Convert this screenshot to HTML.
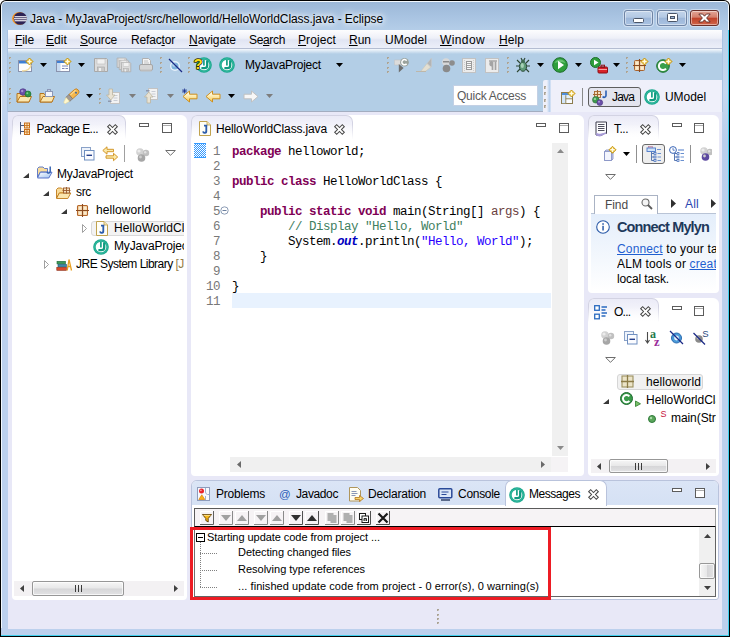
<!DOCTYPE html>
<html><head><meta charset="utf-8"><title>Eclipse</title>
<style>
html,body{margin:0;padding:0;}
body{width:730px;height:637px;overflow:hidden;background:#fff;position:relative;font-family:"Liberation Sans",sans-serif;font-size:12px;color:#000;}
#win{position:absolute;left:0;top:0;width:730px;height:637px;overflow:hidden;}
#win div,#win span.t,#win svg{position:absolute;}
#win svg{overflow:visible;}
span.t{white-space:nowrap;line-height:16px;}
u{text-decoration:underline;text-underline-offset:1px;}
.mono{font-family:"Liberation Mono",monospace;}
b.k{color:#7f0055;font-weight:bold;}
i.v{font-style:normal;color:#6a3e3e;}
i.c{font-style:normal;color:#3f7f5f;}
i.s{font-style:normal;color:#2a00ff;}
i.o{font-style:italic;font-weight:bold;color:#0000c0;}
a{color:#1f5fd0;text-decoration:underline;text-underline-offset:1px;}
em{font-style:normal;color:#957d47;}

</style></head><body>
<div id="win">
<div style="left:0px;top:0px;width:730px;height:637px;background:#000;border-radius:6px 6px 0 0;"></div>
<div style="left:1px;top:1px;width:728px;height:635px;background:#f2f8fd;border-radius:5px 5px 0 0;"></div>
<div style="left:2px;top:2px;width:726px;height:633px;background:linear-gradient(#9cb8d8 0px,#a8c3e1 14px,#b6cfe9 30px,#c5d8f0 90px,#b9ceec 140px,#bcd0ed 300px);border-radius:4px 4px 0 0;"></div>
<div style="left:7px;top:30px;width:716px;height:82px;background:#a9c3e3;"></div>
<div style="left:8px;top:30px;width:714px;height:82px;background:#b3cee6;"></div>
<div style="left:1px;top:628px;width:728px;height:8px;background:#40d0ee;"></div>
<div style="left:1px;top:628px;width:727px;height:7px;background:#bcd0ed;"></div>
<div style="left:728px;top:30px;width:1px;height:606px;background:#40d0ee;"></div>
<svg style="left:12px;top:12px" width="15" height="13" viewBox="0 0 15 13"><ellipse cx="7.300" cy="6.500" rx="7.200" ry="6.400" fill="#f7941e"/><ellipse cx="8.300" cy="6.500" rx="6.600" ry="6.300" fill="#2c2255"/><rect x="2.500" y="4.200" width="12.200" height="1.100" fill="#fff"/><rect x="2" y="6.200" width="12.800" height="1.100" fill="#fff"/><rect x="2.500" y="8.200" width="12.200" height="1.100" fill="#fff"/></svg>
<span class="t" style="left:30px;top:11px;font-size:12px;letter-spacing:-0.074px;text-shadow:0 0 7px #fff,0 0 10px #fff,0 0 4px #eaf2fb;">Java - MyJavaProject/src/helloworld/HelloWorldClass.java - Eclipse</span>
<div style="left:624px;top:10px;width:29px;height:16px;background:linear-gradient(#c3d5eb 0,#b4c9e4 45%,#9db7d9 50%,#a9c2e2 100%);border:1px solid #6f84a4;border-radius:3px;box-sizing:border-box;box-shadow:inset 0 0 0 1px rgba(255,255,255,0.450),0 0 0 1px rgba(235,243,252,0.550);"></div>
<div style="left:657px;top:10px;width:30px;height:16px;background:linear-gradient(#c3d5eb 0,#b4c9e4 45%,#9db7d9 50%,#a9c2e2 100%);border:1px solid #6f84a4;border-radius:3px;box-sizing:border-box;box-shadow:inset 0 0 0 1px rgba(255,255,255,0.450),0 0 0 1px rgba(235,243,252,0.550);"></div>
<div style="left:690px;top:10px;width:29px;height:16px;background:linear-gradient(#e2a596 0,#d47f6b 45%,#bf4128 50%,#d0654a 100%);border:1px solid #6b2f28;border-radius:3px;box-sizing:border-box;box-shadow:inset 0 0 0 1px rgba(255,255,255,0.450),0 0 0 1px rgba(235,243,252,0.550);"></div>
<svg style="left:633px;top:18px" width="12" height="5" viewBox="0 0 12 5"><rect x="0.500" y="0.500" width="10" height="4" rx="1" fill="#fff" stroke="#4a5568" stroke-width="1"/></svg>
<svg style="left:667px;top:13px" width="11" height="9" viewBox="0 0 11 9"><rect x="0.500" y="0.500" width="10" height="8" rx="1" fill="#fff" stroke="#4a5568"/><rect x="3.500" y="3.500" width="4" height="2" fill="#9fb7d8" stroke="#4a5568"/></svg>
<svg style="left:698px;top:13px" width="13" height="10" viewBox="0 0 13 10"><path d="M0.800 1h3.800L6.500 3.200L8.400 1H12.200L8.600 5L12.200 9H8.400L6.500 6.800L4.600 9H0.800L4.400 5z" fill="#fff" stroke="#5b2a25" stroke-width="0.900"/></svg>
<div style="left:8px;top:30px;width:714px;height:18px;background:linear-gradient(#fdfdfe 0,#eef0f8 45%,#e1e5f3 55%,#eceff9 100%);"></div>
<div style="left:8px;top:48px;width:714px;height:1px;background:#b4bdd2;"></div>
<div style="left:8px;top:49px;width:714px;height:5px;background:linear-gradient(#f6f9fd,#b3cee6);"></div>
<span class="t" style="left:15px;top:32px;font-size:12px;letter-spacing:-0.090px;"><u>F</u>ile</span>
<span class="t" style="left:46px;top:32px;font-size:12px;letter-spacing:0.074px;"><u>E</u>dit</span>
<span class="t" style="left:80px;top:32px;font-size:12px;letter-spacing:-0.174px;"><u>S</u>ource</span>
<span class="t" style="left:131px;top:32px;font-size:12px;letter-spacing:-0.172px;">Refac<u>t</u>or</span>
<span class="t" style="left:189px;top:32px;font-size:12px;letter-spacing:-0.047px;"><u>N</u>avigate</span>
<span class="t" style="left:249px;top:32px;font-size:12px;letter-spacing:-0.341px;">Se<u>a</u>rch</span>
<span class="t" style="left:298px;top:32px;font-size:12px;letter-spacing:0.092px;"><u>P</u>roject</span>
<span class="t" style="left:349px;top:32px;font-size:12px;letter-spacing:-0.010px;"><u>R</u>un</span>
<span class="t" style="left:385px;top:32px;font-size:12px;letter-spacing:0.107px;">UModel</span>
<span class="t" style="left:440px;top:32px;font-size:12px;letter-spacing:0.385px;"><u>W</u>indow</span>
<span class="t" style="left:499px;top:32px;font-size:12px;letter-spacing:0.078px;"><u>H</u>elp</span>
<div style="left:8px;top:111px;width:714px;height:1px;background:#a3adc0;"></div>
<div style="left:8px;top:112px;width:714px;height:517px;background:#e8e8f7;"></div>
<svg style="left:9px;top:57px" width="3" height="18" viewBox="0 0 3 18"><rect x="0" y="0" width="2" height="2" fill="#aaa395"/><rect x="1" y="1" width="1" height="1" fill="#cfc9bd"/><rect x="0" y="5" width="2" height="2" fill="#aaa395"/><rect x="1" y="6" width="1" height="1" fill="#cfc9bd"/><rect x="0" y="10" width="2" height="2" fill="#aaa395"/><rect x="1" y="11" width="1" height="1" fill="#cfc9bd"/><rect x="0" y="14" width="2" height="2" fill="#aaa395"/><rect x="1" y="15" width="1" height="1" fill="#cfc9bd"/></svg>
<svg style="left:18px;top:57px" width="16" height="16" viewBox="0 0 16 16"><rect x="0.5" y="3.5" width="13" height="11" fill="#fdfdfe" stroke="#8a93ad"/><rect x="1" y="4" width="12" height="2" fill="#3f7fd4"/><rect x="1" y="6" width="12" height="1" fill="#9cc3ee"/><path d="M13 8Q12 14 4 14" stroke="#f2dca0" stroke-width="1.5" fill="none"/><path d="M11.5 1.0L15.0 4.5L11.5 8.0L8.0 4.5z" fill="#e9b81f" stroke="#c29312" stroke-width="0.9" stroke-linejoin="round"/><path d="M9.3 4.5h4.4M11.5 2.3v4.4" stroke="#fffbe6" stroke-width="1.4"/></svg>
<svg style="left:40px;top:63px" width="7" height="4" viewBox="0 0 7 4"><path d="M0 0h7L3.5 4z" fill="#000"/></svg>
<svg style="left:56px;top:57px" width="16" height="16" viewBox="0 0 16 16"><rect x="0.5" y="3.5" width="13" height="11" fill="#fdfdfe" stroke="#8a93ad"/><rect x="1" y="4" width="12" height="2" fill="#3f7fd4"/><rect x="1" y="6" width="3.5" height="8" fill="#c8daf0"/><rect x="6" y="8.500" width="6" height="1" fill="#7a88b8"/><rect x="6" y="11" width="2.500" height="1" fill="#7a88b8"/><rect x="9.500" y="11" width="2.500" height="1" fill="#7a88b8"/><path d="M11.5 1.0L15.0 4.5L11.5 8.0L8.0 4.5z" fill="#e9b81f" stroke="#c29312" stroke-width="0.9" stroke-linejoin="round"/><path d="M9.3 4.5h4.4M11.5 2.3v4.4" stroke="#fffbe6" stroke-width="1.4"/></svg>
<svg style="left:78px;top:63px" width="7" height="4" viewBox="0 0 7 4"><path d="M0 0h7L3.5 4z" fill="#000"/></svg>
<svg style="left:93px;top:57px" width="16" height="16" viewBox="0 0 16 16"><g transform="translate(0,0)"><path d="M1.5 1.5h12l1 1v12h-13z" fill="#dcdcdc" stroke="#a8a8a8"/><rect x="4" y="2" width="8" height="5" fill="#f1f1f1" stroke="#bdbdbd" stroke-width="0.6"/><rect x="4.5" y="10" width="7" height="4.5" fill="#c9c9c9" stroke="#a5a5a5" stroke-width="0.6"/><rect x="6" y="11" width="2" height="3" fill="#efefef"/></g></svg>
<svg style="left:116px;top:57px" width="16" height="16" viewBox="0 0 16 16"><g transform="scale(0.72)"><g transform="translate(0,0)"><path d="M1.5 1.5h12l1 1v12h-13z" fill="#dcdcdc" stroke="#a8a8a8"/><rect x="4" y="2" width="8" height="5" fill="#f1f1f1" stroke="#bdbdbd" stroke-width="0.6"/><rect x="4.5" y="10" width="7" height="4.5" fill="#c9c9c9" stroke="#a5a5a5" stroke-width="0.6"/><rect x="6" y="11" width="2" height="3" fill="#efefef"/></g><g transform="translate(3,3)"><path d="M1.5 1.5h12l1 1v12h-13z" fill="#dcdcdc" stroke="#a8a8a8"/><rect x="4" y="2" width="8" height="5" fill="#f1f1f1" stroke="#bdbdbd" stroke-width="0.6"/><rect x="4.5" y="10" width="7" height="4.5" fill="#c9c9c9" stroke="#a5a5a5" stroke-width="0.6"/><rect x="6" y="11" width="2" height="3" fill="#efefef"/></g><g transform="translate(6,6)"><path d="M1.5 1.5h12l1 1v12h-13z" fill="#dcdcdc" stroke="#a8a8a8"/><rect x="4" y="2" width="8" height="5" fill="#f1f1f1" stroke="#bdbdbd" stroke-width="0.6"/><rect x="4.5" y="10" width="7" height="4.5" fill="#c9c9c9" stroke="#a5a5a5" stroke-width="0.6"/><rect x="6" y="11" width="2" height="3" fill="#efefef"/></g></g></svg>
<svg style="left:138px;top:57px" width="16" height="16" viewBox="0 0 16 16"><path d="M4.5 1.500h6l2 2v4h-8z" fill="#f4f4f4" stroke="#b0b0b0"/><path d="M6 4h4M6 6h5" stroke="#c0c0c0"/><rect x="1.500" y="7.500" width="13" height="6" rx="1.500" fill="#d6d6d6" stroke="#a6a6a6"/><rect x="2.500" y="12.500" width="11" height="2" fill="#bdbdbd"/></svg>
<svg style="left:160px;top:57px" width="3" height="18" viewBox="0 0 3 18"><rect x="0" y="0" width="2" height="2" fill="#aaa395"/><rect x="1" y="1" width="1" height="1" fill="#cfc9bd"/><rect x="0" y="5" width="2" height="2" fill="#aaa395"/><rect x="1" y="6" width="1" height="1" fill="#cfc9bd"/><rect x="0" y="10" width="2" height="2" fill="#aaa395"/><rect x="1" y="11" width="1" height="1" fill="#cfc9bd"/><rect x="0" y="14" width="2" height="2" fill="#aaa395"/><rect x="1" y="15" width="1" height="1" fill="#cfc9bd"/></svg>
<svg style="left:167px;top:57px" width="16" height="16" viewBox="0 0 16 16"><circle cx="8" cy="9" r="4.3" fill="#7fb2dc" stroke="#e8f2fb" stroke-width="1.4"/><circle cx="7" cy="8" r="1.8" fill="#b7d6ee"/><path d="M2 2L15 15" stroke="#1b2a86" stroke-width="1.3"/></svg>
<svg style="left:188px;top:57px" width="3" height="18" viewBox="0 0 3 18"><rect x="0" y="0" width="2" height="2" fill="#aaa395"/><rect x="1" y="1" width="1" height="1" fill="#cfc9bd"/><rect x="0" y="5" width="2" height="2" fill="#aaa395"/><rect x="1" y="6" width="1" height="1" fill="#cfc9bd"/><rect x="0" y="10" width="2" height="2" fill="#aaa395"/><rect x="1" y="11" width="1" height="1" fill="#cfc9bd"/><rect x="0" y="14" width="2" height="2" fill="#aaa395"/><rect x="1" y="15" width="1" height="1" fill="#cfc9bd"/></svg>
<svg style="left:195px;top:57px" width="17" height="16" viewBox="0 0 17 16"><g transform="translate(1,0)"><circle cx="8" cy="8" r="7.800" fill="#19a88d"/><circle cx="8" cy="8" r="6.300" fill="none" stroke="#3fc0a6" stroke-width="0.800"/><circle cx="8" cy="8" r="5.300" fill="#fff"/><path d="M7.900 2.800V8.600" stroke="#14a085" stroke-width="1.700" fill="none"/><path d="M11.200 3.600V8.400Q11.200 11.100 8.200 11.100H5.400" stroke="#109a80" stroke-width="2.300" fill="none"/></g><text x="-1.200" y="11.500" font-family="Liberation Sans,sans-serif" font-weight="bold" font-size="14.500" fill="#ffe01a" stroke="#2e2600" stroke-width="1.500" paint-order="stroke" stroke-linejoin="round">?</text></svg>
<svg style="left:219px;top:57px" width="16" height="16" viewBox="0 0 16 16"><circle cx="8" cy="8" r="7.800" fill="#19a88d"/><circle cx="8" cy="8" r="6.300" fill="none" stroke="#3fc0a6" stroke-width="0.800"/><circle cx="8" cy="8" r="5.300" fill="#fff"/><path d="M7.900 2.800V8.600" stroke="#14a085" stroke-width="1.700" fill="none"/><path d="M11.200 3.600V8.400Q11.200 11.100 8.200 11.100H5.400" stroke="#109a80" stroke-width="2.300" fill="none"/></svg>
<span class="t" style="left:245px;top:57px;font-size:12px;letter-spacing:-0.208px;">MyJavaProject</span>
<svg style="left:336px;top:63px" width="7" height="4" viewBox="0 0 7 4"><path d="M0 0h7L3.5 4z" fill="#000"/></svg>
<svg style="left:387px;top:57px" width="3" height="18" viewBox="0 0 3 18"><rect x="0" y="0" width="2" height="2" fill="#aaa395"/><rect x="1" y="1" width="1" height="1" fill="#cfc9bd"/><rect x="0" y="5" width="2" height="2" fill="#aaa395"/><rect x="1" y="6" width="1" height="1" fill="#cfc9bd"/><rect x="0" y="10" width="2" height="2" fill="#aaa395"/><rect x="1" y="11" width="1" height="1" fill="#cfc9bd"/><rect x="0" y="14" width="2" height="2" fill="#aaa395"/><rect x="1" y="15" width="1" height="1" fill="#cfc9bd"/></svg>
<svg style="left:394px;top:57px" width="16" height="16" viewBox="0 0 16 16"><path d="M0.500 3h6v5h-6z" fill="#dcdcdc" stroke="#c4c4c4" stroke-width="0.600"/><path d="M4.800 7v8.500l4.800-4.500z" fill="#6e6e6e"/><circle cx="10.500" cy="5.200" r="4.300" fill="#9aa29c"/><path d="M12.600 3.700a2.600 2.600 0 1 0 0 3" stroke="#fff" stroke-width="1.500" fill="none"/></svg>
<svg style="left:416px;top:57px" width="16" height="16" viewBox="0 0 16 16"><path d="M15.500 1V10L11 6.500z" fill="#b4b4b4" stroke="#c8c8c8" stroke-width="0.500"/><path d="M11 6.500L14.800 10.200L9.500 14.300H4.800z" fill="#e3dfd2" stroke="#c9c4b6" stroke-width="0.600"/><path d="M0 14.500h10" stroke="#bdb7aa"/></svg>
<svg style="left:440px;top:57px" width="16" height="16" viewBox="0 0 16 16"><circle cx="6" cy="5" r="3.800" fill="#d8d8d8"/><circle cx="12" cy="6" r="2.800" fill="#8d8d8d"/><circle cx="6.500" cy="11.500" r="3.800" fill="#8a8a8a"/><rect x="3" y="4" width="6" height="1.500" fill="#8a8a8a"/></svg>
<svg style="left:462px;top:57px" width="15" height="16" viewBox="0 0 15 16"><rect x="0.500" y="1.500" width="13" height="14" fill="#ececec" stroke="#c2c2c2"/><rect x="4.500" y="4.500" width="5" height="8" fill="#fafafa" stroke="#9a9a9a"/><path d="M5 6.500h4M5 8.500h4M5 10.500h4" stroke="#a4a4a4"/><path d="M2.500 3v12M11.500 3v12" stroke="#cfcfcf" stroke-dasharray="1 1"/></svg>
<svg style="left:485px;top:57px" width="15" height="16" viewBox="0 0 15 16"><rect x="0.500" y="1.500" width="13" height="14" fill="#ececec" stroke="#c2c2c2"/><path d="M7.500 4.500V13M10.500 4.500V13" stroke="#a4a4a4" stroke-width="1.700" fill="none"/><path d="M4 4h8" stroke="#a4a4a4" stroke-width="1.400"/><path d="M7 4a2.700 2.700 0 0 0 0 5.400z" fill="#a4a4a4"/></svg>
<svg style="left:507px;top:57px" width="3" height="18" viewBox="0 0 3 18"><rect x="0" y="0" width="2" height="2" fill="#aaa395"/><rect x="1" y="1" width="1" height="1" fill="#cfc9bd"/><rect x="0" y="5" width="2" height="2" fill="#aaa395"/><rect x="1" y="6" width="1" height="1" fill="#cfc9bd"/><rect x="0" y="10" width="2" height="2" fill="#aaa395"/><rect x="1" y="11" width="1" height="1" fill="#cfc9bd"/><rect x="0" y="14" width="2" height="2" fill="#aaa395"/><rect x="1" y="15" width="1" height="1" fill="#cfc9bd"/></svg>
<svg style="left:515px;top:57px" width="16" height="16" viewBox="0 0 16 16"><path d="M2 3L5 6M14 3L11 6M1 9h4M11 9h4M2 15l3-3M14 15l-3-3M6 1l1.500 3M10 1L8.500 4" stroke="#2e4632" stroke-width="1.100" fill="none"/><ellipse cx="8" cy="9.500" rx="3.600" ry="4.800" fill="#5e9a78" stroke="#2c4a3a"/><ellipse cx="7.300" cy="8.500" rx="1.600" ry="2.600" fill="#a6d0b4"/><circle cx="8" cy="4.300" r="1.800" fill="#3f6a52"/></svg>
<svg style="left:537px;top:63px" width="7" height="4" viewBox="0 0 7 4"><path d="M0 0h7L3.5 4z" fill="#000"/></svg>
<svg style="left:552px;top:57px" width="16" height="16" viewBox="0 0 16 16"><circle cx="8" cy="8" r="7.300" fill="#2f9e3c" stroke="#1c6e2a"/><path d="M2.500 6a6 6 0 0 1 11 0Q8 4 2.500 6z" fill="#7fd188" opacity="0.7"/><path d="M6 3.800L12 8L6 12.200z" fill="#fff"/></svg>
<svg style="left:575px;top:63px" width="7" height="4" viewBox="0 0 7 4"><path d="M0 0h7L3.5 4z" fill="#000"/></svg>
<svg style="left:590px;top:57px" width="18" height="17" viewBox="0 0 18 17"><circle cx="5.500" cy="5.500" r="5" fill="#2f9e3c" stroke="#1c6e2a"/><path d="M4 2.800L8.500 5.500L4 8.200z" fill="#fff"/><rect x="8" y="10" width="9.500" height="6" rx="1" fill="#d8232a" stroke="#8e0f14"/><rect x="11" y="8.200" width="3.500" height="2" fill="none" stroke="#8e0f14"/><rect x="8.500" y="12" width="8.500" height="1" fill="#f6a0a0"/></svg>
<svg style="left:613px;top:63px" width="7" height="4" viewBox="0 0 7 4"><path d="M0 0h7L3.5 4z" fill="#000"/></svg>
<svg style="left:626px;top:57px" width="3" height="18" viewBox="0 0 3 18"><rect x="0" y="0" width="2" height="2" fill="#aaa395"/><rect x="1" y="1" width="1" height="1" fill="#cfc9bd"/><rect x="0" y="5" width="2" height="2" fill="#aaa395"/><rect x="1" y="6" width="1" height="1" fill="#cfc9bd"/><rect x="0" y="10" width="2" height="2" fill="#aaa395"/><rect x="1" y="11" width="1" height="1" fill="#cfc9bd"/><rect x="0" y="14" width="2" height="2" fill="#aaa395"/><rect x="1" y="15" width="1" height="1" fill="#cfc9bd"/></svg>
<svg style="left:632px;top:57px" width="16" height="16" viewBox="0 0 16 16"><rect x="2.500" y="3.500" width="10" height="10" rx="1" fill="#f3d9b0" stroke="#a8632e" stroke-width="1"/><rect x="4" y="5" width="2.500" height="2.500" fill="#fbeacc"/><rect x="9" y="5" width="2.500" height="2.500" fill="#fbeacc"/><rect x="4" y="10" width="2.500" height="2.500" fill="#fbeacc"/><rect x="9" y="10" width="2.500" height="2.500" fill="#fbeacc"/><path d="M7.500 2v13M1 8.500h13" stroke="#8a4a20" stroke-width="1.100"/><path d="M12.5 1.0L16.0 4.5L12.5 8.0L9.0 4.5z" fill="#e9b81f" stroke="#c29312" stroke-width="0.9" stroke-linejoin="round"/><path d="M10.3 4.5h4.4M12.5 2.3v4.4" stroke="#fffbe6" stroke-width="1.4"/></svg>
<svg style="left:656px;top:57px" width="16" height="16" viewBox="0 0 16 16"><circle cx="7" cy="9" r="6.300" fill="#3aa04a" stroke="#1f7030"/><path d="M10 6.500a4 4 0 1 0 0 5" stroke="#fff" stroke-width="2" fill="none"/><path d="M12.5 1.0L16.0 4.5L12.5 8.0L9.0 4.5z" fill="#e9b81f" stroke="#c29312" stroke-width="0.9" stroke-linejoin="round"/><path d="M10.3 4.5h4.4M12.5 2.3v4.4" stroke="#fffbe6" stroke-width="1.4"/></svg>
<svg style="left:679px;top:63px" width="7" height="4" viewBox="0 0 7 4"><path d="M0 0h7L3.5 4z" fill="#000"/></svg>
<svg style="left:9px;top:88px" width="3" height="18" viewBox="0 0 3 18"><rect x="0" y="0" width="2" height="2" fill="#aaa395"/><rect x="1" y="1" width="1" height="1" fill="#cfc9bd"/><rect x="0" y="5" width="2" height="2" fill="#aaa395"/><rect x="1" y="6" width="1" height="1" fill="#cfc9bd"/><rect x="0" y="10" width="2" height="2" fill="#aaa395"/><rect x="1" y="11" width="1" height="1" fill="#cfc9bd"/><rect x="0" y="14" width="2" height="2" fill="#aaa395"/><rect x="1" y="15" width="1" height="1" fill="#cfc9bd"/></svg>
<svg style="left:16px;top:88px" width="17" height="16" viewBox="0 0 17 16"><path d="M1 5.500h4l1 1.500h7v7H1z" fill="#f6d58c" stroke="#b5741c"/><path d="M1 14L4 8.500h11.500L13 14z" fill="#fbe7b0" stroke="#b5741c"/><circle cx="7" cy="4" r="3.300" fill="#6a4fa8" stroke="#473080" stroke-width="0.600"/><circle cx="6.200" cy="3" r="1.200" fill="#a694d4"/><circle cx="12" cy="6" r="3" fill="#2f9448" stroke="#1d6a30" stroke-width="0.600"/><circle cx="11.300" cy="5.200" r="1" fill="#7fcf90"/></svg>
<svg style="left:39px;top:88px" width="16" height="16" viewBox="0 0 16 16"><path d="M1 5.500h4l1 1.500h7v7H1z" fill="#f6d58c" stroke="#b5741c"/><path d="M1 14L4 8.500h11.500L13 14z" fill="#fbe7b0" stroke="#b5741c"/><rect x="6.500" y="3.500" width="7" height="5" fill="#f4f6fb" stroke="#8c98b8"/><rect x="8.500" y="1.500" width="3" height="2" fill="#c6cfe4" stroke="#8c98b8"/></svg>
<svg style="left:63px;top:88px" width="17" height="16" viewBox="0 0 17 16"><g transform="translate(8.500,8) rotate(-42)"><path d="M-1 -2.800H6.500Q9 -2.800 9 0Q9 2.800 6.500 2.800H-1z" fill="#f5b84e" stroke="#c27a1a" stroke-width="0.800"/><path d="M0 -1.600H7" stroke="#fbdc9a" stroke-width="1"/><circle cx="5.500" cy="0.600" r="0.900" fill="#1e5bb0"/><rect x="-5" y="-2.800" width="4" height="5.600" fill="#a39c96" stroke="#77706a" stroke-width="0.600"/><path d="M-5 -2.500L-10 -0.500V1.500L-5 2.500z" fill="#fff8cf" stroke="#ecd98f" stroke-width="0.500"/></g></svg>
<svg style="left:86px;top:94px" width="7" height="4" viewBox="0 0 7 4"><path d="M0 0h7L3.5 4z" fill="#000"/></svg>
<svg style="left:99px;top:88px" width="3" height="18" viewBox="0 0 3 18"><rect x="0" y="0" width="2" height="2" fill="#aaa395"/><rect x="1" y="1" width="1" height="1" fill="#cfc9bd"/><rect x="0" y="5" width="2" height="2" fill="#aaa395"/><rect x="1" y="6" width="1" height="1" fill="#cfc9bd"/><rect x="0" y="10" width="2" height="2" fill="#aaa395"/><rect x="1" y="11" width="1" height="1" fill="#cfc9bd"/><rect x="0" y="14" width="2" height="2" fill="#aaa395"/><rect x="1" y="15" width="1" height="1" fill="#cfc9bd"/></svg>
<svg style="left:105px;top:88px" width="16" height="16" viewBox="0 0 16 16"><rect x="5.5" y="4.5" width="9" height="11" fill="#f3f3f3" stroke="#c3c3c3"/><path d="M8.5 7.5h4" stroke="#c8ccd4"/><path d="M8.5 10.0h4" stroke="#c8ccd4"/><path d="M8.5 12.5h4" stroke="#c8ccd4"/><path d="M4 1h3.500v6H10L5.800 12L1.500 7H4z" fill="#e9e3d4" stroke="#bdb5a0" stroke-width="0.800"/><rect x="3" y="12.500" width="3.500" height="1.500" fill="#8e98ad"/></svg>
<svg style="left:129px;top:94px" width="7" height="4" viewBox="0 0 7 4"><path d="M0 0h7L3.5 4z" fill="#7d7d7d"/></svg>
<svg style="left:143px;top:88px" width="16" height="16" viewBox="0 0 16 16"><rect x="5.5" y="0.5" width="9" height="11" fill="#f3f3f3" stroke="#c3c3c3"/><path d="M8.5 3.5h4" stroke="#c8ccd4"/><path d="M8.5 6.0h4" stroke="#c8ccd4"/><path d="M8.5 8.5h4" stroke="#c8ccd4"/><path d="M4 15h3.500V9H10L5.800 4L1.500 9H4z" fill="#e9e3d4" stroke="#bdb5a0" stroke-width="0.800"/><rect x="3" y="2" width="3.500" height="1.500" fill="#8e98ad"/></svg>
<svg style="left:167px;top:94px" width="7" height="4" viewBox="0 0 7 4"><path d="M0 0h7L3.5 4z" fill="#7d7d7d"/></svg>
<svg style="left:181px;top:88px" width="17" height="16" viewBox="0 0 17 16"><g transform="translate(1,0)"><defs><linearGradient id="ga" x1="0" y1="0" x2="0" y2="1"><stop offset="0.2" stop-color="#fffbe2"/><stop offset="1" stop-color="#f6c94e"/></linearGradient></defs><path d="M1 8.500L7.500 3v3.200H15v4.600H7.500V14z" fill="url(#ga)" stroke="#cf8f1c" stroke-linejoin="round"/></g><path d="M1 3h5M3.500 0.500v5M1.700 1.200l3.600 3.600M5.300 1.200L1.700 4.800" stroke="#1a2f8a" stroke-width="0.800"/></svg>
<svg style="left:205px;top:88px" width="16" height="16" viewBox="0 0 16 16"><defs><linearGradient id="ga" x1="0" y1="0" x2="0" y2="1"><stop offset="0.2" stop-color="#fffbe2"/><stop offset="1" stop-color="#f6c94e"/></linearGradient></defs><path d="M1 8.500L7.500 3v3.200H15v4.600H7.500V14z" fill="url(#ga)" stroke="#cf8f1c" stroke-linejoin="round"/></svg>
<svg style="left:228px;top:94px" width="7" height="4" viewBox="0 0 7 4"><path d="M0 0h7L3.5 4z" fill="#000"/></svg>
<svg style="left:243px;top:88px" width="16" height="16" viewBox="0 0 16 16"><g transform="translate(16,0) scale(-1,1)"><path d="M1 8.500L7.500 3v3.200H15v4.600H7.500V14z" fill="#f7f7f7" stroke="#c0c0c0" stroke-linejoin="round"/></g></svg>
<svg style="left:266px;top:94px" width="7" height="4" viewBox="0 0 7 4"><path d="M0 0h7L3.5 4z" fill="#7d7d7d"/></svg>
<div style="left:453px;top:85px;width:85px;height:21px;background:#fff;border:1px solid #c3d0e4;box-sizing:border-box;"></div>
<span class="t" style="left:457px;top:88px;font-size:12px;color:#5a5a5a;letter-spacing:-0.253px;">Quick Access</span>
<div style="left:543px;top:80px;width:179px;height:32px;background:#eff0fa;border-radius:2px 0 0 0;"></div>
<div style="left:547px;top:80px;width:4px;height:32px;background:linear-gradient(90deg,#eaf0fa,#b9d0ee 60%,#dbe6f6);"></div>
<svg style="left:544px;top:86px" width="3" height="22" viewBox="0 0 3 22"><rect x="0" y="0" width="2" height="3" fill="#aaa395"/><rect x="1" y="1" width="1" height="2" fill="#cfc9bd"/><rect x="0" y="6" width="2" height="3" fill="#aaa395"/><rect x="1" y="7" width="1" height="2" fill="#cfc9bd"/><rect x="0" y="13" width="2" height="3" fill="#aaa395"/><rect x="1" y="14" width="1" height="2" fill="#cfc9bd"/><rect x="0" y="19" width="2" height="3" fill="#aaa395"/><rect x="1" y="20" width="1" height="2" fill="#cfc9bd"/></svg>
<svg style="left:560px;top:89px" width="16" height="16" viewBox="0 0 16 16"><rect x="1.500" y="3.500" width="11" height="11" fill="#f8fbff" stroke="#8c7c4e"/><rect x="2" y="4" width="10" height="2.200" fill="#4f8fdc"/><rect x="2" y="6.200" width="3.800" height="8" fill="#d2e6fa"/><rect x="5.800" y="6.200" width="6.200" height="3.500" fill="#e2f0fc"/><path d="M5.800 6.200v8M5.800 9.800h6.200" stroke="#8c7c4e" stroke-width="0.900"/><path d="M11.5 1.0L15.0 4.5L11.5 8.0L8.0 4.5z" fill="#e9b81f" stroke="#c29312" stroke-width="0.9" stroke-linejoin="round"/><path d="M9.3 4.5h4.4M11.5 2.3v4.4" stroke="#fffbe6" stroke-width="1.4"/></svg>
<div style="left:582px;top:88px;width:1px;height:18px;background:#8a8a8a;"></div>
<div style="left:588px;top:87px;width:53px;height:20px;background:#e3e4ee;border:1px solid #5e5e5e;border-radius:3px;box-sizing:border-box;"></div>
<svg style="left:591px;top:89px" width="18" height="17" viewBox="0 0 18 17"><rect x="3.500" y="2.500" width="6" height="6" fill="#f3dfc0" stroke="#a5662e" stroke-width="0.900"/><path d="M6.500 1v9M2 5.500h9" stroke="#a5662e" stroke-width="1.100"/><circle cx="4.800" cy="10.800" r="3.300" fill="#3f9a4e" stroke="#256a32" stroke-width="0.600"/><circle cx="3.900" cy="9.900" r="1.200" fill="#8fd09a"/><circle cx="8.800" cy="13.600" r="2.900" fill="#6b50a8" stroke="#46307c" stroke-width="0.600"/><circle cx="8" cy="12.800" r="1" fill="#a996d8"/><path d="M15 1.500v5a1.800 1.800 0 0 1-3.300 1" stroke="#2b5fb4" stroke-width="1.600" fill="none"/></svg>
<span class="t" style="left:612px;top:89px;font-size:12px;letter-spacing:-0.840px;">Java</span>
<svg style="left:644px;top:89px" width="16" height="16" viewBox="0 0 16 16"><circle cx="8" cy="8" r="7.800" fill="#19a88d"/><circle cx="8" cy="8" r="6.300" fill="none" stroke="#3fc0a6" stroke-width="0.800"/><circle cx="8" cy="8" r="5.300" fill="#fff"/><path d="M7.900 2.800V8.600" stroke="#14a085" stroke-width="1.700" fill="none"/><path d="M11.200 3.600V8.400Q11.200 11.100 8.200 11.100H5.400" stroke="#109a80" stroke-width="2.300" fill="none"/></svg>
<span class="t" style="left:665px;top:89px;font-size:12px;letter-spacing:-0.060px;">UModel</span>
<div style="left:12px;top:115px;width:175px;height:485px;background:#fff;border-radius:6px 6px 4px 4px;"></div>
<div style="left:12px;top:115px;width:114px;height:26px;background:linear-gradient(#ebebf7 0,#f4f4fb 45%,#ffffff 95%);border:1px solid #d3d3e3;border-bottom:none;border-radius:6px 7px 0 0;box-sizing:border-box;"></div>
<div style="left:12px;top:124px;width:115px;height:17px;background:linear-gradient(rgba(255,255,255,0),#fff 90%);"></div>
<svg style="left:20px;top:122px" width="11" height="13" viewBox="0 0 11 13"><path d="M0.500 0v12.500M0.500 3.500h4M0.500 9.500h4" stroke="#4d5b7c" fill="none"/><rect x="4.500" y="1" width="5" height="5" fill="#fbe3b8" stroke="#c8711c" stroke-width="1"/><path d="M7 1v5M4.500 3.5h5" stroke="#c8711c" stroke-width="0.900"/><rect x="4.500" y="7.5" width="5" height="5" fill="#fbe3b8" stroke="#c8711c" stroke-width="1"/><path d="M7 7.5v5M4.500 10.0h5" stroke="#c8711c" stroke-width="0.900"/></svg>
<span class="t" style="left:36.5px;top:121px;font-size:12px;letter-spacing:-0.546px;">Package E...</span>
<svg style="left:107px;top:124px" width="11" height="11" viewBox="0 0 11 11"><path d="M0.700 2.700L2.700 0.700L5.500 3.500L8.300 0.700L10.300 2.700L7.500 5.500L10.300 8.300L8.300 10.300L5.500 7.500L2.700 10.300L0.700 8.300L3.500 5.500z" fill="#fff" stroke="#484848" stroke-width="1.050"/></svg>
<svg style="left:139px;top:123px" width="10" height="4" viewBox="0 0 10 4"><rect x="0.500" y="0.500" width="9" height="3" fill="#fff" stroke="#5c5c5c"/></svg>
<svg style="left:162px;top:123px" width="10" height="10" viewBox="0 0 10 10"><rect x="0.500" y="0.500" width="9" height="9" fill="#fff" stroke="#5c5c5c"/><rect x="0" y="0" width="10" height="2.500" fill="#5c5c5c"/><rect x="1" y="1" width="8" height="1" fill="#fff"/></svg>
<svg style="left:81px;top:147px" width="14" height="14" viewBox="0 0 14 14"><rect x="0.500" y="0.500" width="9" height="9" fill="#eef3fb" stroke="#8aa2c8"/><rect x="3.500" y="3.500" width="9.500" height="9.500" fill="#fbfcff" stroke="#6f8fc0"/><path d="M5.500 8.300h5.500" stroke="#27408b" stroke-width="1.400"/></svg>
<svg style="left:102px;top:146px" width="16" height="16" viewBox="0 0 16 16"><path d="M0.800 4.500L5 0.800V3.300H11.500V5.700H5V8.200z" fill="#fbe9a8" stroke="#cf8f1c" stroke-width="0.900" stroke-linejoin="round"/><path d="M15.700 11L11.500 7.300V9.800H4V12.200H11.500V14.700z" fill="#fbe9a8" stroke="#cf8f1c" stroke-width="0.900" stroke-linejoin="round"/></svg>
<div style="left:124px;top:145px;width:1px;height:17px;background:#a0a0a0;"></div>
<svg style="left:135px;top:147px" width="15" height="15" viewBox="0 0 15 15"><circle cx="5" cy="5" r="3.800" fill="#d2d2d2"/><circle cx="4" cy="4" r="1.600" fill="#ececec"/><circle cx="11" cy="6" r="3.200" fill="#c0c0c0"/><circle cx="10.200" cy="5.200" r="1.200" fill="#e0e0e0"/><circle cx="6.500" cy="11" r="3.800" fill="#a6a6a6"/><circle cx="5.500" cy="10" r="1.400" fill="#cdcdcd"/></svg>
<svg style="left:165px;top:150px" width="11" height="6" viewBox="0 0 11 6"><path d="M0.700 0.500h9.600L5.500 5.300z" fill="#fff" stroke="#5c5c5c" stroke-width="0.900"/></svg>
<div style="left:12px;top:165px;width:172px;height:120px;overflow:hidden;"></div>
<svg style="left:23px;top:173px" width="6" height="5" viewBox="0 0 6 5"><path d="M6 0V5H0z" fill="#383838"/></svg>
<svg style="left:37px;top:165.5px" width="16" height="15" viewBox="0 0 16 15"><path d="M0.500 11V2.500l1.500-1.500h4l1.500 1.500h3V6H3.500z" fill="#f9dc9a" stroke="#5672c4" stroke-width="0.900"/><path d="M0.500 12L3.300 6.200h11.700L11.800 12z" fill="url(#gjp)" stroke="#4a68c4" stroke-width="0.900"/><defs><linearGradient id="gjp" x1="0" y1="0" x2="1" y2="1"><stop offset="0" stop-color="#ffffff"/><stop offset="1" stop-color="#9fc2f0"/></linearGradient></defs><path d="M13.200 0.500v5a1.700 1.700 0 0 1-3.200 0.700" stroke="#2c5cac" stroke-width="1.400" fill="none"/></svg>
<span class="t" style="left:57px;top:166px;font-size:12px;letter-spacing:-0.208px;">MyJavaProject</span>
<svg style="left:43px;top:191px" width="6" height="5" viewBox="0 0 6 5"><path d="M6 0V5H0z" fill="#383838"/></svg>
<svg style="left:56px;top:184.5px" width="16" height="16" viewBox="0 0 16 16"><path d="M0.500 13V4.500l1.500-1.500h3.500l1.500 1.500h2V8H3.500z" fill="#f9dc9a" stroke="#c07a1a" stroke-width="0.900"/><path d="M0.500 13.500L3.300 8h11.500L11.800 13.500z" fill="#fbe6ae" stroke="#c07a1a" stroke-width="0.900"/><rect x="7.500" y="3" width="6" height="5" fill="#f6e2c0" stroke="#9a5a2a" stroke-width="0.900"/><path d="M10.500 2v6.500M6.500 5.500h8" stroke="#9a5a2a" stroke-width="0.900"/></svg>
<span class="t" style="left:76px;top:184px;font-size:12px;letter-spacing:-0.333px;">src</span>
<svg style="left:61px;top:209px" width="6" height="5" viewBox="0 0 6 5"><path d="M6 0V5H0z" fill="#383838"/></svg>
<svg style="left:76px;top:203px" width="14" height="14" viewBox="0 0 14 14"><rect x="1.500" y="2.500" width="10" height="10" rx="1" fill="#f3d5aa" stroke="#b5672a" stroke-width="1.100"/><rect x="3" y="4" width="2.500" height="2.500" fill="#fbeacc"/><rect x="8" y="4" width="2.500" height="2.500" fill="#fbeacc"/><rect x="3" y="9" width="2.500" height="2.500" fill="#fbeacc"/><rect x="8" y="9" width="2.500" height="2.500" fill="#fbeacc"/><path d="M6.500 1v13M0 7.500h13" stroke="#8a4a20" stroke-width="1.100"/></svg>
<span class="t" style="left:96px;top:202px;font-size:12px;letter-spacing:0.097px;">helloworld</span>
<div style="left:91px;top:221px;width:100px;height:15px;background:#f3f3f3;border:1px solid #d9d9d9;border-radius:3px;box-sizing:border-box;"></div>
<svg style="left:82px;top:224px" width="5" height="9" viewBox="0 0 5 9"><path d="M0.5 0.5L4.5 4.5L0.5 8.5z" fill="#fff" stroke="#a0a0a0" stroke-width="1"/></svg>
<svg style="left:96px;top:221px" width="12" height="15" viewBox="0 0 12 15"><path d="M0.500 0.500h7.500l3.500 3.500v10.500h-11z" fill="#fffef6" stroke="#c0a24e"/><path d="M8 0.500v3.500h3.500" fill="#f3e6b8" stroke="#c0a24e" stroke-width="0.800"/><path d="M5 4.700h3.300M7.300 4.700v5.300a1.600 1.600 0 0 1-3.200 0.400" stroke="#2c5cac" stroke-width="1.800" fill="none"/></svg>
<span class="t" style="left:114px;top:220px;font-size:12px;letter-spacing:0.059px;">HelloWorldClass.java</span>
<svg style="left:93px;top:239px" width="16" height="16" viewBox="0 0 16 16"><circle cx="8" cy="8" r="7.800" fill="#19a88d"/><circle cx="8" cy="8" r="6.300" fill="none" stroke="#3fc0a6" stroke-width="0.800"/><circle cx="8" cy="8" r="5.300" fill="#fff"/><path d="M7.900 2.800V8.600" stroke="#14a085" stroke-width="1.700" fill="none"/><path d="M11.200 3.600V8.400Q11.200 11.100 8.200 11.100H5.400" stroke="#109a80" stroke-width="2.300" fill="none"/></svg>
<span class="t" style="left:114px;top:238px;font-size:12px;letter-spacing:-0.140px;">MyJavaProject.ump</span>
<svg style="left:44px;top:260px" width="5" height="9" viewBox="0 0 5 9"><path d="M0.5 0.5L4.5 4.5L0.5 8.5z" fill="#fff" stroke="#a0a0a0" stroke-width="1"/></svg>
<svg style="left:56px;top:257px" width="16" height="14" viewBox="0 0 16 14"><rect x="1" y="4.300" width="8.500" height="2.600" fill="#3a9a5a" stroke="#1f6a38" stroke-width="0.600"/><rect x="2" y="7.300" width="8.500" height="2.600" fill="#3f8aa8" stroke="#1f5a78" stroke-width="0.600"/><rect x="0.800" y="10.300" width="9.700" height="3" fill="#d84a2a" stroke="#8a2a14" stroke-width="0.600"/><path d="M11.200 13.500L13 2.500L15.500 13.500M12 9.500h2.700" fill="none" stroke="#e8a020" stroke-width="1.300"/></svg>
<span class="t" style="left:76px;top:256px;font-size:12px;letter-spacing:-0.518px;">JRE System Library <em>[JavaSE-1.7]</em></span>
<div style="left:184px;top:165px;width:3px;height:120px;background:#fff;"></div>
<div style="left:187px;top:165px;width:4px;height:120px;background:#e8e8f7;"></div>
<div style="left:14px;top:581px;width:170px;height:15px;background:#f3f1f3;"></div>
<svg style="left:20px;top:585px" width="4" height="7" viewBox="0 0 4 7"><path d="M4 0L0 3.500L4 7z" fill="#404040"/></svg>
<svg style="left:174px;top:585px" width="4" height="7" viewBox="0 0 4 7"><path d="M0 0L4 3.500L0 7z" fill="#404040"/></svg>
<div style="left:32px;top:581px;width:92px;height:15px;background:linear-gradient(#f6f6f6 0,#e8e8e9 48%,#d6d6d8 52%,#e2e2e4 100%);border:1px solid #979797;border-radius:2px;box-sizing:border-box;box-shadow:inset 0 0 0 1px rgba(255,255,255,0.700);"></div>
<svg style="left:74px;top:585px" width="8" height="7" viewBox="0 0 8 7"><path d="M1.500 0v7M4.500 0v7M7.500 0v7" stroke="#3a3a3a"/></svg>
<div style="left:191px;top:115px;width:393px;height:361px;background:#fff;border-radius:6px 6px 4px 4px;"></div>
<div style="left:191px;top:115px;width:162px;height:26px;background:linear-gradient(#ebebf7 0,#f4f4fb 45%,#ffffff 95%);border:1px solid #d3d3e3;border-bottom:none;border-radius:6px 7px 0 0;box-sizing:border-box;"></div>
<div style="left:191px;top:124px;width:163px;height:17px;background:linear-gradient(rgba(255,255,255,0),#fff 90%);"></div>
<svg style="left:199px;top:121px" width="12" height="15" viewBox="0 0 12 15"><path d="M0.500 0.500h7.500l3.500 3.500v10.500h-11z" fill="#fffef6" stroke="#c0a24e"/><path d="M8 0.500v3.500h3.500" fill="#f3e6b8" stroke="#c0a24e" stroke-width="0.800"/><path d="M5 4.700h3.300M7.300 4.700v5.300a1.600 1.600 0 0 1-3.200 0.400" stroke="#2c5cac" stroke-width="1.800" fill="none"/></svg>
<span class="t" style="left:216px;top:121px;font-size:12px;letter-spacing:-0.141px;">HelloWorldClass.java</span>
<svg style="left:334px;top:124px" width="11" height="11" viewBox="0 0 11 11"><path d="M0.700 2.700L2.700 0.700L5.500 3.500L8.300 0.700L10.300 2.700L7.500 5.500L10.300 8.300L8.300 10.300L5.500 7.500L2.700 10.300L0.700 8.300L3.500 5.500z" fill="#fff" stroke="#484848" stroke-width="1.050"/></svg>
<svg style="left:536px;top:123px" width="10" height="4" viewBox="0 0 10 4"><rect x="0.500" y="0.500" width="9" height="3" fill="#fff" stroke="#5c5c5c"/></svg>
<svg style="left:559px;top:123px" width="10" height="10" viewBox="0 0 10 10"><rect x="0.500" y="0.500" width="9" height="9" fill="#fff" stroke="#5c5c5c"/><rect x="0" y="0" width="10" height="2.500" fill="#5c5c5c"/><rect x="1" y="1" width="8" height="1" fill="#fff"/></svg>
<div style="left:194px;top:143px;width:12px;height:15px;background:repeating-conic-gradient(#3399ff 0 25%,#ffffff 0 50%) 0 0/2px 2px;border-top:1px solid #3399ff;border-bottom:1px solid #3399ff;box-sizing:border-box;"></div>
<div style="left:232px;top:293px;width:319px;height:15px;background:#e8f2fe;"></div>
<span class="t" style="left:213px;top:143.5px;font-size:12.5px;color:#787878;font-family:'Liberation Mono',monospace;letter-spacing:-0.516px;">1</span>
<span class="t" style="left:232px;top:143.5px;font-size:12.5px;font-family:'Liberation Mono',monospace;letter-spacing:-0.502px;"><b class="k">package</b> helloworld;</span>
<span class="t" style="left:213px;top:158.5px;font-size:12.5px;color:#787878;font-family:'Liberation Mono',monospace;letter-spacing:-0.516px;">2</span>
<span class="t" style="left:213px;top:173.5px;font-size:12.5px;color:#787878;font-family:'Liberation Mono',monospace;letter-spacing:-0.516px;">3</span>
<span class="t" style="left:232px;top:173.5px;font-size:12.5px;font-family:'Liberation Mono',monospace;letter-spacing:-0.503px;"><b class="k">public</b> <b class="k">class</b> HelloWorldClass {</span>
<span class="t" style="left:213px;top:188.5px;font-size:12.5px;color:#787878;font-family:'Liberation Mono',monospace;letter-spacing:-0.516px;">4</span>
<span class="t" style="left:213px;top:203.5px;font-size:12.5px;color:#787878;font-family:'Liberation Mono',monospace;letter-spacing:-0.516px;">5</span>
<span class="t" style="left:260px;top:203.5px;font-size:12.5px;font-family:'Liberation Mono',monospace;letter-spacing:-0.504px;"><b class="k">public</b> <b class="k">static</b> <b class="k">void</b> main(String[] <i class="v">args</i>) {</span>
<span class="t" style="left:213px;top:218.5px;font-size:12.5px;color:#787878;font-family:'Liberation Mono',monospace;letter-spacing:-0.516px;">6</span>
<span class="t" style="left:288px;top:218.5px;font-size:12.5px;font-family:'Liberation Mono',monospace;letter-spacing:-0.501px;"><i class="c">// Display "Hello, World"</i></span>
<span class="t" style="left:213px;top:233.5px;font-size:12.5px;color:#787878;font-family:'Liberation Mono',monospace;letter-spacing:-0.516px;">7</span>
<span class="t" style="left:288px;top:233.5px;font-size:12.5px;font-family:'Liberation Mono',monospace;letter-spacing:-0.503px;">System.<i class="o">out</i>.println(<i class="s">"Hello, World"</i>);</span>
<span class="t" style="left:213px;top:248.5px;font-size:12.5px;color:#787878;font-family:'Liberation Mono',monospace;letter-spacing:-0.516px;">8</span>
<span class="t" style="left:260px;top:248.5px;font-size:12.5px;font-family:'Liberation Mono',monospace;letter-spacing:-0.516px;">}</span>
<span class="t" style="left:213px;top:263.5px;font-size:12.5px;color:#787878;font-family:'Liberation Mono',monospace;letter-spacing:-0.516px;">9</span>
<span class="t" style="left:206px;top:278.5px;font-size:12.5px;color:#787878;font-family:'Liberation Mono',monospace;letter-spacing:-0.508px;">10</span>
<span class="t" style="left:232px;top:278.5px;font-size:12.5px;font-family:'Liberation Mono',monospace;letter-spacing:-0.516px;">}</span>
<span class="t" style="left:206px;top:293.5px;font-size:12.5px;color:#787878;font-family:'Liberation Mono',monospace;letter-spacing:-0.508px;">11</span>
<svg style="left:220px;top:206px" width="9" height="9" viewBox="0 0 9 9"><circle cx="4.5" cy="4.5" r="3.7" fill="#fff" stroke="#8c9cb5" stroke-width="1"/><path d="M2.5 4.5h4" stroke="#6b7f9e" stroke-width="1"/></svg>
<div style="left:552px;top:143px;width:16px;height:313px;background:#f0f0f0;"></div>
<svg style="left:557px;top:149px" width="7" height="4" viewBox="0 0 7 4"><path d="M0 4L3.500 0L7 4z" fill="#8a8a8a"/></svg>
<svg style="left:557px;top:446px" width="7" height="4" viewBox="0 0 7 4"><path d="M0 0L3.500 4L7 0z" fill="#8a8a8a"/></svg>
<div style="left:230px;top:457px;width:321px;height:15px;background:#f0f0f0;"></div>
<svg style="left:237px;top:461px" width="4" height="7" viewBox="0 0 4 7"><path d="M4 0L0 3.500L4 7z" fill="#6a6a6a"/></svg>
<svg style="left:541px;top:461px" width="4" height="7" viewBox="0 0 4 7"><path d="M0 0L4 3.500L0 7z" fill="#6a6a6a"/></svg>
<div style="left:551px;top:457px;width:17px;height:15px;background:#f5f3f5;"></div>
<div style="left:588px;top:115px;width:131px;height:178px;background:#fff;border-radius:6px 6px 4px 4px;"></div>
<div style="left:588px;top:115px;width:71px;height:26px;background:linear-gradient(#ebebf7 0,#f4f4fb 45%,#ffffff 95%);border:1px solid #d3d3e3;border-bottom:none;border-radius:6px 7px 0 0;box-sizing:border-box;"></div>
<div style="left:588px;top:124px;width:72px;height:17px;background:linear-gradient(rgba(255,255,255,0),#fff 90%);"></div>
<svg style="left:595px;top:121px" width="13" height="16" viewBox="0 0 13 16"><path d="M1 1h10.500v11.500q-1.500 -1 -3 0.500t-3.500 1.500t-4 -0.500z" fill="#fdfdff" stroke="#3c3c4c" stroke-width="1"/><path d="M1.200 11.500q2.500 2 5 1t5 -0.800v1l-3 1.200l-3.200 1.500l-3.800 -0.600z" fill="#a79ad6"/><path d="M3 3.500h6.500M3 5.500h6.500M3 7.500h6.500M3 9.500h6.500" stroke="#3c3c4c" stroke-width="0.900"/></svg>
<span class="t" style="left:614px;top:121px;font-size:12px;letter-spacing:-0.504px;">T...</span>
<svg style="left:640px;top:124px" width="11" height="11" viewBox="0 0 11 11"><path d="M0.700 2.700L2.700 0.700L5.500 3.500L8.300 0.700L10.300 2.700L7.500 5.500L10.300 8.300L8.300 10.300L5.500 7.500L2.700 10.300L0.700 8.300L3.500 5.500z" fill="#fff" stroke="#484848" stroke-width="1.050"/></svg>
<svg style="left:672px;top:123px" width="10" height="4" viewBox="0 0 10 4"><rect x="0.500" y="0.500" width="9" height="3" fill="#fff" stroke="#5c5c5c"/></svg>
<svg style="left:694px;top:123px" width="10" height="10" viewBox="0 0 10 10"><rect x="0.500" y="0.500" width="9" height="9" fill="#fff" stroke="#5c5c5c"/><rect x="0" y="0" width="10" height="2.500" fill="#5c5c5c"/><rect x="1" y="1" width="8" height="1" fill="#fff"/></svg>
<svg style="left:603px;top:146px" width="14" height="16" viewBox="0 0 14 16"><path d="M1.500 5.500l1.500-1.500h7v9l-1.500 1.500h-7z" fill="#c9d0ea" stroke="#7f8cc0" stroke-width="0.800"/><path d="M1.500 5.500h7v9h-7z" fill="#f3f5fd" stroke="#7f8cc0" stroke-width="0.800"/><path d="M9.5 0.2999999999999998L13.0 3.8L9.5 7.3L6.0 3.8z" fill="#e9b81f" stroke="#c29312" stroke-width="0.9" stroke-linejoin="round"/><path d="M7.3 3.8h4.4M9.5 1.5999999999999996v4.4" stroke="#fffbe6" stroke-width="1.4"/></svg>
<svg style="left:623px;top:152px" width="7" height="4" viewBox="0 0 7 4"><path d="M0 0h7L3.5 4z" fill="#000"/></svg>
<div style="left:636px;top:145px;width:1px;height:18px;background:#909090;"></div>
<div style="left:642px;top:144px;width:23px;height:20px;background:#eeeeee;border:1px solid #6a6a6a;border-radius:3px;box-sizing:border-box;"></div>
<svg style="left:646px;top:146px" width="16" height="16" viewBox="0 0 16 16"><rect x="2.500" y="0.500" width="4" height="2" fill="#e9b9c9" stroke="#b87a98" stroke-width="0.600"/><rect x="1" y="2" width="8.500" height="3.500" fill="#cfe2f8" stroke="#4a78c8" stroke-width="0.900"/><path d="M11 3.500h4" stroke="#6a90d0"/><path d="M5.500 6v8.500" stroke="#5a78b0" fill="none"/><path d="M5.500 7.5h2.500" stroke="#5a78b0"/><rect x="8" y="6.5" width="2" height="2" fill="#eaf1fb" stroke="#3a66b8" stroke-width="0.700"/><path d="M11.500 7.5h3.500" stroke="#6a90d0"/><path d="M5.500 11h2.500" stroke="#5a78b0"/><rect x="8" y="10" width="2" height="2" fill="#eaf1fb" stroke="#3a66b8" stroke-width="0.700"/><path d="M11.500 11h3.500" stroke="#6a90d0"/><path d="M5.500 14.5h2.500" stroke="#5a78b0"/><rect x="8" y="13.5" width="2" height="2" fill="#eaf1fb" stroke="#3a66b8" stroke-width="0.700"/><path d="M11.500 14.5h3.500" stroke="#6a90d0"/></svg>
<svg style="left:669px;top:146px" width="16" height="16" viewBox="0 0 16 16"><path d="M5.500 6v8.500" stroke="#5a78b0" fill="none"/><path d="M5.500 7.5h2.500" stroke="#5a78b0"/><rect x="8" y="6.5" width="2" height="2" fill="#eaf1fb" stroke="#3a66b8" stroke-width="0.700"/><path d="M11.500 7.5h3.500" stroke="#6a90d0"/><path d="M5.500 11h2.500" stroke="#5a78b0"/><rect x="8" y="10" width="2" height="2" fill="#eaf1fb" stroke="#3a66b8" stroke-width="0.700"/><path d="M11.500 11h3.500" stroke="#6a90d0"/><path d="M5.500 14.5h2.500" stroke="#5a78b0"/><rect x="8" y="13.5" width="2" height="2" fill="#eaf1fb" stroke="#3a66b8" stroke-width="0.700"/><path d="M11.500 14.5h3.500" stroke="#6a90d0"/><rect x="2" y="5" width="6" height="2" fill="#fff"/><circle cx="4" cy="4" r="3.400" fill="#fff" stroke="#3a66b8" stroke-width="1"/><path d="M4 2v2.200h1.800" stroke="#3a66b8" stroke-width="0.800" fill="none"/><path d="M9 4h6" stroke="#4a78c8"/></svg>
<div style="left:690px;top:145px;width:1px;height:18px;background:#909090;"></div>
<div style="left:699px;top:146px;width:13px;height:16px;overflow:hidden;"><div style="left:0;top:0;width:16px;height:16px"><svg width="16" height="16" viewBox="0 0 16 16" style="left:0;top:0"><circle cx="5" cy="5" r="3.800" fill="#d2d2d2"/><circle cx="4" cy="4" r="1.600" fill="#ececec"/><circle cx="11" cy="6" r="3.200" fill="#c0c0c0"/><circle cx="10.200" cy="5.200" r="1.200" fill="#e0e0e0"/><circle cx="6.500" cy="11" r="3.800" fill="#5d4aa0"/><circle cx="5.500" cy="10" r="1.400" fill="#cdcdcd"/></svg></div></div>
<svg style="left:605px;top:174px" width="11" height="6" viewBox="0 0 11 6"><path d="M0.700 0.500h9.600L5.500 5.300z" fill="#fff" stroke="#5c5c5c" stroke-width="0.900"/></svg>
<div style="left:591px;top:214px;width:125px;height:77px;background:linear-gradient(#e4eefb,#f4f8fd 60%,#ffffff);"></div>
<div style="left:591px;top:213px;width:125px;height:1px;background:#b9c4d6;"></div>
<div style="left:594px;top:195px;width:64px;height:19px;background:#fff;border:1px solid #aab3c4;border-bottom:none;box-sizing:border-box;"></div>
<span class="t" style="left:605px;top:197px;font-size:12px;color:#4a4a4a;letter-spacing:-0.086px;">Find</span>
<svg style="left:641px;top:198px" width="12" height="12" viewBox="0 0 12 12"><circle cx="4.500" cy="4.500" r="3.500" fill="#f4f4f4" stroke="#6a6a6a" stroke-width="1.100"/><path d="M7 7L11 11" stroke="#5a5a5a" stroke-width="1.800"/></svg>
<svg style="left:671px;top:199px" width="5" height="9" viewBox="0 0 5 9"><path d="M0 0L5 4.5L0 9z" fill="#303030"/></svg>
<span class="t" style="left:685px;top:196px;font-size:12px;color:#2a46b0;letter-spacing:0.219px;">All</span>
<svg style="left:711px;top:199px" width="5" height="9" viewBox="0 0 5 9"><path d="M0 0L5 4.5L0 9z" fill="#303030"/></svg>
<svg style="left:596px;top:220px" width="14" height="14" viewBox="0 0 14 14"><circle cx="7" cy="7" r="6.300" fill="#fff" stroke="#2a5aa8" stroke-width="1.100"/><rect x="6.300" y="5.800" width="1.500" height="4.700" fill="#2a5aa8"/><rect x="6.300" y="3.200" width="1.500" height="1.600" fill="#2a5aa8"/></svg>
<div style="left:591px;top:214px;width:125px;height:78px;overflow:hidden;"></div>
<span class="t" style="left:617px;top:219px;font-size:14.5px;color:#1e395b;letter-spacing:-0.856px;"><b>Connect Mylyn</b></span>
<div style="left:617px;top:237px;width:99px;height:60px;overflow:hidden;">
<span class="t" style="left:0px;top:4px;font-size:12px;letter-spacing:0.149px;"><a>Connect</a> to your task and</span>
<span class="t" style="left:0px;top:19px;font-size:12px;letter-spacing:0.139px;">ALM tools or <a>create</a> a</span>
<span class="t" style="left:0px;top:34px;font-size:12px;letter-spacing:-0.124px;">local task.</span>
</div>
<div style="left:588px;top:298px;width:131px;height:178px;background:#fff;border-radius:6px 6px 4px 4px;"></div>
<div style="left:588px;top:298px;width:71px;height:26px;background:linear-gradient(#ebebf7 0,#f4f4fb 45%,#ffffff 95%);border:1px solid #d3d3e3;border-bottom:none;border-radius:6px 7px 0 0;box-sizing:border-box;"></div>
<div style="left:588px;top:307px;width:72px;height:17px;background:linear-gradient(rgba(255,255,255,0),#fff 90%);"></div>
<svg style="left:594px;top:305px" width="14" height="15" viewBox="0 0 14 15"><rect x="0.700" y="0.700" width="4.600" height="4.600" fill="#fff" stroke="#2a6ac0" stroke-width="1.300"/><rect x="0.700" y="9.200" width="4.600" height="4.600" fill="#fff" stroke="#2a6ac0" stroke-width="1.300"/><path d="M7.500 2h5.500M7.500 5h4M7.500 8h5.500M7.500 11h4" stroke="#2a6ac0" stroke-width="1.300"/></svg>
<span class="t" style="left:614px;top:303.5px;font-size:12px;letter-spacing:-0.711px;">O...</span>
<svg style="left:640px;top:306px" width="11" height="11" viewBox="0 0 11 11"><path d="M0.700 2.700L2.700 0.700L5.500 3.500L8.300 0.700L10.300 2.700L7.500 5.500L10.300 8.300L8.300 10.300L5.500 7.500L2.700 10.300L0.700 8.300L3.500 5.500z" fill="#fff" stroke="#484848" stroke-width="1.050"/></svg>
<svg style="left:672px;top:306px" width="10" height="4" viewBox="0 0 10 4"><rect x="0.500" y="0.500" width="9" height="3" fill="#fff" stroke="#5c5c5c"/></svg>
<svg style="left:694px;top:306px" width="10" height="10" viewBox="0 0 10 10"><rect x="0.500" y="0.500" width="9" height="9" fill="#fff" stroke="#5c5c5c"/><rect x="0" y="0" width="10" height="2.500" fill="#5c5c5c"/><rect x="1" y="1" width="8" height="1" fill="#fff"/></svg>
<svg style="left:600px;top:330px" width="15" height="15" viewBox="0 0 15 15"><circle cx="5" cy="5" r="3.800" fill="#d2d2d2"/><circle cx="4" cy="4" r="1.600" fill="#ececec"/><circle cx="11" cy="6" r="3.200" fill="#c0c0c0"/><circle cx="10.200" cy="5.200" r="1.200" fill="#e0e0e0"/><circle cx="6.500" cy="11" r="3.800" fill="#a6a6a6"/><circle cx="5.500" cy="10" r="1.400" fill="#cdcdcd"/></svg>
<svg style="left:624px;top:331px" width="14" height="14" viewBox="0 0 14 14"><rect x="0.500" y="0.500" width="9" height="9" fill="#eef3fb" stroke="#8aa2c8"/><rect x="3.500" y="3.500" width="9.500" height="9.500" fill="#fbfcff" stroke="#6f8fc0"/><path d="M5.500 8.300h5.500" stroke="#27408b" stroke-width="1.400"/></svg>
<svg style="left:645px;top:330px" width="17" height="16" viewBox="0 0 17 16"><path d="M2.500 2v10M0.500 10l2 3l2-3" stroke="#4a4a4a" stroke-width="1.100" fill="none"/><text x="5" y="7.500" font-family="Liberation Serif,serif" font-weight="bold" font-size="12" fill="#1f7a4a">a</text><text x="9" y="15.500" font-family="Liberation Serif,serif" font-weight="bold" font-size="12.500" fill="#9a2a9a">z</text></svg>
<svg style="left:669px;top:330px" width="15" height="15" viewBox="0 0 15 15"><circle cx="7.500" cy="8" r="5" fill="#4a9ad8" stroke="#2a6ab0"/><circle cx="7.500" cy="8" r="2.400" fill="#e8f2fb"/><path d="M1 1L14 14" stroke="#1b2a86" stroke-width="1.300"/></svg>
<svg style="left:693px;top:330px" width="15" height="15" viewBox="0 0 15 15"><circle cx="6" cy="9" r="3.800" fill="#8a8a8a"/><circle cx="5" cy="8" r="1.400" fill="#c0c0c0"/><path d="M0.500 3L12 14.500" stroke="#1b2a86" stroke-width="1.300"/><text x="9.300" y="7" font-family="Liberation Sans,sans-serif" font-size="9.500" fill="#2c4a7c">S</text></svg>
<svg style="left:605px;top:357px" width="11" height="6" viewBox="0 0 11 6"><path d="M0.700 0.500h9.600L5.500 5.300z" fill="#fff" stroke="#5c5c5c" stroke-width="0.900"/></svg>
<div style="left:617px;top:374px;width:86px;height:16px;background:#f1f1f1;border:1px solid #d6d6d6;border-radius:3px;box-sizing:border-box;"></div>
<svg style="left:621px;top:374px" width="14" height="15" viewBox="0 0 14 15"><rect x="1" y="2" width="11" height="11" fill="#ece4c8" stroke="#9c9060" stroke-width="1.100"/><path d="M6.500 1v13M0 7.500h13" stroke="#8c7c48" stroke-width="1.300"/></svg>
<span class="t" style="left:646px;top:374px;font-size:12px;letter-spacing:0.097px;">helloworld</span>
<svg style="left:603px;top:399px" width="6" height="5" viewBox="0 0 6 5"><path d="M6 0V5H0z" fill="#383838"/></svg>
<svg style="left:620px;top:392px" width="21" height="16" viewBox="0 0 21 16"><circle cx="6.500" cy="6.500" r="6" fill="#3a9a4a" stroke="#1f6a30"/><path d="M9.300 4.300a3.600 3.600 0 1 0 0 4.600" stroke="#fff" stroke-width="2" fill="none"/><path d="M15.500 9L20.500 11.800L15.500 14.500z" fill="#7ac06a" stroke="#2a7a2a" stroke-width="0.800"/></svg>
<div style="left:646px;top:392px;width:70px;height:34px;overflow:hidden;">
<span class="t" style="left:0px;top:0px;font-size:12px;letter-spacing:-0.032px;">HelloWorldClass</span>
</div>
<svg style="left:648px;top:415px" width="8" height="8" viewBox="0 0 8 8"><circle cx="4" cy="4" r="3.5" fill="#5aa65a" stroke="#2f7a3a" stroke-width="1"/><circle cx="3" cy="3" r="1.2" fill="#a8dba8"/></svg>
<span class="t" style="left:660.5px;top:406px;font-size:9px;color:#c8143c;letter-spacing:-0.516px;">S</span>
<div style="left:671px;top:410px;width:45px;height:16px;overflow:hidden;">
<span class="t" style="left:0px;top:0px;font-size:12px;letter-spacing:-0.074px;">main(String[])</span>
</div>
<div style="left:591px;top:459px;width:125px;height:14px;background:#f3f1f3;"></div>
<svg style="left:597px;top:463px" width="4" height="7" viewBox="0 0 4 7"><path d="M4 0L0 3.500L4 7z" fill="#404040"/></svg>
<svg style="left:706px;top:463px" width="4" height="7" viewBox="0 0 4 7"><path d="M0 0L4 3.500L0 7z" fill="#404040"/></svg>
<div style="left:609px;top:459px;width:59px;height:14px;background:linear-gradient(#f6f6f6 0,#e8e8e9 48%,#d6d6d8 52%,#e2e2e4 100%);border:1px solid #979797;border-radius:2px;box-sizing:border-box;box-shadow:inset 0 0 0 1px rgba(255,255,255,0.700);"></div>
<svg style="left:634px;top:463px" width="8" height="7" viewBox="0 0 8 7"><path d="M1.500 0v7M4.500 0v7M7.500 0v7" stroke="#3a3a3a"/></svg>
<div style="left:191px;top:480px;width:528px;height:120px;background:#fff;border:1px solid #b9c3dc;border-radius:6px 6px 3px 3px;box-sizing:border-box;"></div>
<div style="left:192px;top:481px;width:526px;height:24px;background:linear-gradient(#dbe5f6,#d5e1f4);border-radius:5px 5px 0 0;"></div>
<div style="left:505px;top:480px;width:102px;height:26px;background:#fff;border:1px solid #b9c3dc;border-bottom:none;border-radius:7px 7px 0 0;box-sizing:border-box;"></div>
<svg style="left:197px;top:487px" width="14" height="15" viewBox="0 0 14 15"><rect x="0.500" y="0.500" width="12" height="13" fill="#f9f9fd" stroke="#8d9cbc"/><path d="M8.500 1v4q0 2 2 2.500h2M8.500 13v-4" stroke="#9fb0d0" fill="none"/><circle cx="4.500" cy="4" r="2.500" fill="#e8222a"/><circle cx="3.900" cy="3.300" r="0.900" fill="#f9a0a0"/><path d="M1.800 12.500L4.800 7.800L7.800 12.500z" fill="#f9b01a" stroke="#d8820a" stroke-width="0.700"/></svg>
<span class="t" style="left:216px;top:486px;font-size:12px;letter-spacing:-0.211px;">Problems</span>
<span class="t" style="left:279px;top:485.5px;font-size:11.5px;color:#2a5db8;letter-spacing:-1.188px;">@</span>
<span class="t" style="left:296px;top:486px;font-size:12px;letter-spacing:-0.386px;">Javadoc</span>
<svg style="left:349px;top:487px" width="15" height="15" viewBox="0 0 15 15"><path d="M0.500 0.500h8l3 3v10.500h-11z" fill="#fffdf2" stroke="#b0965c"/><path d="M2.500 4.500h5M2.500 6.500h6M2.500 8.500h4" stroke="#7a8ab0" stroke-width="0.900"/><path d="M6 10.500h4.500V8.500L14.500 11.500L10.500 14.500V12.500H6z" fill="#f7d66a" stroke="#b5741c" stroke-width="0.800"/></svg>
<span class="t" style="left:368px;top:486px;font-size:12px;letter-spacing:-0.246px;">Declaration</span>
<svg style="left:438px;top:488px" width="15" height="13" viewBox="0 0 15 13"><rect x="0.800" y="0.800" width="13" height="9" rx="1" fill="#dbe7f7" stroke="#2a4a98" stroke-width="1.500"/><path d="M3.500 4h7M3.500 6.500h5" stroke="#2a4a98"/><rect x="3" y="11" width="9" height="2" fill="#5a6a8a"/></svg>
<span class="t" style="left:458px;top:486px;font-size:12px;letter-spacing:-0.290px;">Console</span>
<svg style="left:509px;top:487px" width="16" height="16" viewBox="0 0 16 16"><circle cx="8" cy="8" r="7.800" fill="#19a88d"/><circle cx="8" cy="8" r="6.300" fill="none" stroke="#3fc0a6" stroke-width="0.800"/><circle cx="8" cy="8" r="5.300" fill="#fff"/><path d="M7.900 2.800V8.600" stroke="#14a085" stroke-width="1.700" fill="none"/><path d="M11.200 3.600V8.400Q11.200 11.100 8.200 11.100H5.400" stroke="#109a80" stroke-width="2.300" fill="none"/></svg>
<span class="t" style="left:529px;top:486px;font-size:12px;letter-spacing:-0.463px;">Messages</span>
<svg style="left:588px;top:489px" width="11" height="11" viewBox="0 0 11 11"><path d="M0.700 2.700L2.700 0.700L5.500 3.500L8.300 0.700L10.300 2.700L7.500 5.500L10.300 8.300L8.300 10.300L5.500 7.500L2.700 10.300L0.700 8.300L3.500 5.500z" fill="#fff" stroke="#484848" stroke-width="1.050"/></svg>
<svg style="left:672px;top:488px" width="10" height="4" viewBox="0 0 10 4"><rect x="0.500" y="0.500" width="9" height="3" fill="#fff" stroke="#5c5c5c"/></svg>
<svg style="left:695px;top:488px" width="10" height="10" viewBox="0 0 10 10"><rect x="0.500" y="0.500" width="9" height="9" fill="#fff" stroke="#5c5c5c"/><rect x="0" y="0" width="10" height="2.500" fill="#5c5c5c"/><rect x="1" y="1" width="8" height="1" fill="#fff"/></svg>
<div style="left:194px;top:508px;width:522px;height:19px;background:#f6f3f5;border-top:1px solid #5a5a5a;border-bottom:1px solid #000;border-left:1px solid #5a5a5a;border-right:1px solid #a0a0a0;box-sizing:border-box;"></div>
<svg style="left:200px;top:511px" width="14" height="14" viewBox="0 0 14 14"><path d="M0.500 13V0.500H13" stroke="#ffffff" fill="none"/><path d="M0 13.500h13.500V0" stroke="#606060" fill="none"/><path d="M2.500 3.500h9L8.200 7.500v3.500L5.800 9.500V7.500z" fill="#f7b81a" stroke="#5a3a00" stroke-width="0.900"/><path d="M3.500 4.300h7" stroke="#fde9a0" stroke-width="0.900"/></svg>
<svg style="left:219px;top:511px" width="14" height="14" viewBox="0 0 14 14"><path d="M0.500 13V0.500H13" stroke="#ffffff" fill="none"/><path d="M0 13.500h13.500V0" stroke="#8a8a8a" fill="none"/><path d="M2 4L7 10L12 4z" fill="#a0a0a0"/></svg>
<svg style="left:234.5px;top:511px" width="14" height="14" viewBox="0 0 14 14"><path d="M0.500 13V0.500H13" stroke="#ffffff" fill="none"/><path d="M0 13.500h13.500V0" stroke="#8a8a8a" fill="none"/><path d="M2 10L7 4L12 10z" fill="#a0a0a0"/></svg>
<svg style="left:254px;top:511px" width="14" height="14" viewBox="0 0 14 14"><path d="M0.500 13V0.500H13" stroke="#ffffff" fill="none"/><path d="M0 13.500h13.500V0" stroke="#8a8a8a" fill="none"/><path d="M2 4L7 10L12 4z" fill="#a0a0a0"/></svg>
<svg style="left:269.5px;top:511px" width="14" height="14" viewBox="0 0 14 14"><path d="M0.500 13V0.500H13" stroke="#ffffff" fill="none"/><path d="M0 13.500h13.500V0" stroke="#8a8a8a" fill="none"/><path d="M2 10L7 4L12 10z" fill="#a0a0a0"/></svg>
<svg style="left:289px;top:511px" width="14" height="14" viewBox="0 0 14 14"><path d="M0.500 13V0.500H13" stroke="#ffffff" fill="none"/><path d="M0 13.500h13.500V0" stroke="#505050" fill="none"/><path d="M2 4L7 10L12 4z" fill="#303030"/></svg>
<svg style="left:305px;top:511px" width="14" height="14" viewBox="0 0 14 14"><path d="M0.500 13V0.500H13" stroke="#ffffff" fill="none"/><path d="M0 13.500h13.500V0" stroke="#505050" fill="none"/><path d="M2 10L7 4L12 10z" fill="#303030"/></svg>
<svg style="left:325px;top:511px" width="14" height="14" viewBox="0 0 14 14"><path d="M0.500 13V0.500H13" stroke="#ffffff" fill="none"/><path d="M0 13.500h13.500V0" stroke="#8a8a8a" fill="none"/><path d="M2.500 2h6v2h3v8H5.500v-2h-3z" fill="#b0b0b0"/></svg>
<svg style="left:341px;top:511px" width="14" height="14" viewBox="0 0 14 14"><path d="M0.500 13V0.500H13" stroke="#ffffff" fill="none"/><path d="M0 13.500h13.500V0" stroke="#8a8a8a" fill="none"/><path d="M2.500 2h6v2h3v8H5.500v-2h-3z" fill="#b0b0b0"/></svg>
<svg style="left:357px;top:511px" width="14" height="14" viewBox="0 0 14 14"><path d="M0.500 13V0.500H13" stroke="#ffffff" fill="none"/><path d="M0 13.500h13.500V0" stroke="#505050" fill="none"/><rect x="2.500" y="2.500" width="6" height="6" fill="#fff" stroke="#1a1a1a"/><rect x="5" y="5" width="6.500" height="6.500" fill="#fff" stroke="#1a1a1a"/><path d="M7 10v-2.500h2.500V10M7 9h2.500" stroke="#1a1a1a" stroke-width="0.900" fill="none"/></svg>
<svg style="left:376px;top:511px" width="14" height="14" viewBox="0 0 14 14"><path d="M0.500 13V0.500H13" stroke="#ffffff" fill="none"/><path d="M0 13.500h13.500V0" stroke="#505050" fill="none"/><path d="M2.500 2.500L11.500 11.500M11.500 2.500L2.500 11.500" stroke="#1a1a1a" stroke-width="2.200"/></svg>
<div style="left:194px;top:527px;width:522px;height:70px;background:#fff;border-left:1px solid #707070;border-right:1px solid #646464;border-bottom:1px solid #646464;box-sizing:border-box;"></div>
<div style="left:699px;top:527px;width:16px;height:69px;background:#f0f0f0;"></div>
<svg style="left:704px;top:534px" width="7" height="4" viewBox="0 0 7 4"><path d="M0 4L3.500 0L7 4z" fill="#404040"/></svg>
<svg style="left:704px;top:586px" width="7" height="4" viewBox="0 0 7 4"><path d="M0 0L3.500 4L7 0z" fill="#404040"/></svg>
<div style="left:699px;top:563px;width:16px;height:16px;background:linear-gradient(90deg,#f6f6f6 0,#e8e8e9 48%,#d6d6d8 52%,#e2e2e4 100%);border:1px solid #979797;border-radius:2px;box-sizing:border-box;box-shadow:inset 0 0 0 1px rgba(255,255,255,0.700);"></div>
<svg style="left:196px;top:533px" width="9" height="9" viewBox="0 0 9 9"><rect x="0.5" y="0.5" width="8" height="8" fill="#fff" stroke="#000"/><path d="M2 4.5h5" stroke="#000"/></svg>
<div style="left:200px;top:542px;width:1px;height:46px;background-image:linear-gradient(#808080 50%,transparent 50%);background-size:1px 2px;"></div>
<div style="left:200px;top:553px;width:18px;height:1px;background-image:linear-gradient(90deg,#808080 50%,transparent 50%);background-size:2px 1px;"></div>
<div style="left:200px;top:570px;width:18px;height:1px;background-image:linear-gradient(90deg,#808080 50%,transparent 50%);background-size:2px 1px;"></div>
<div style="left:200px;top:587px;width:18px;height:1px;background-image:linear-gradient(90deg,#808080 50%,transparent 50%);background-size:2px 1px;"></div>
<span class="t" style="left:207px;top:528.5px;font-size:11px;letter-spacing:-0.051px;">Starting update code from project ...</span>
<span class="t" style="left:238px;top:544px;font-size:11px;letter-spacing:-0.059px;">Detecting changed files</span>
<span class="t" style="left:238px;top:561px;font-size:11px;letter-spacing:-0.007px;">Resolving type references</span>
<span class="t" style="left:238px;top:578px;font-size:11px;letter-spacing:0.070px;">... finished update code from project - 0 error(s), 0 warning(s)</span>
<div style="left:190px;top:527px;width:361px;height:73px;border:3px solid #ed1c24;box-sizing:border-box;"></div>
<svg style="left:437px;top:609px" width="3" height="16" viewBox="0 0 3 16"><rect x="0" y="0" width="2" height="2" fill="#aaa395"/><rect x="1" y="1" width="1" height="1" fill="#cfc9bd"/><rect x="0" y="5" width="2" height="2" fill="#aaa395"/><rect x="1" y="6" width="1" height="1" fill="#cfc9bd"/><rect x="0" y="9" width="2" height="2" fill="#aaa395"/><rect x="1" y="10" width="1" height="1" fill="#cfc9bd"/><rect x="0" y="13" width="2" height="2" fill="#aaa395"/><rect x="1" y="14" width="1" height="1" fill="#cfc9bd"/></svg>
</div>
</body></html>
